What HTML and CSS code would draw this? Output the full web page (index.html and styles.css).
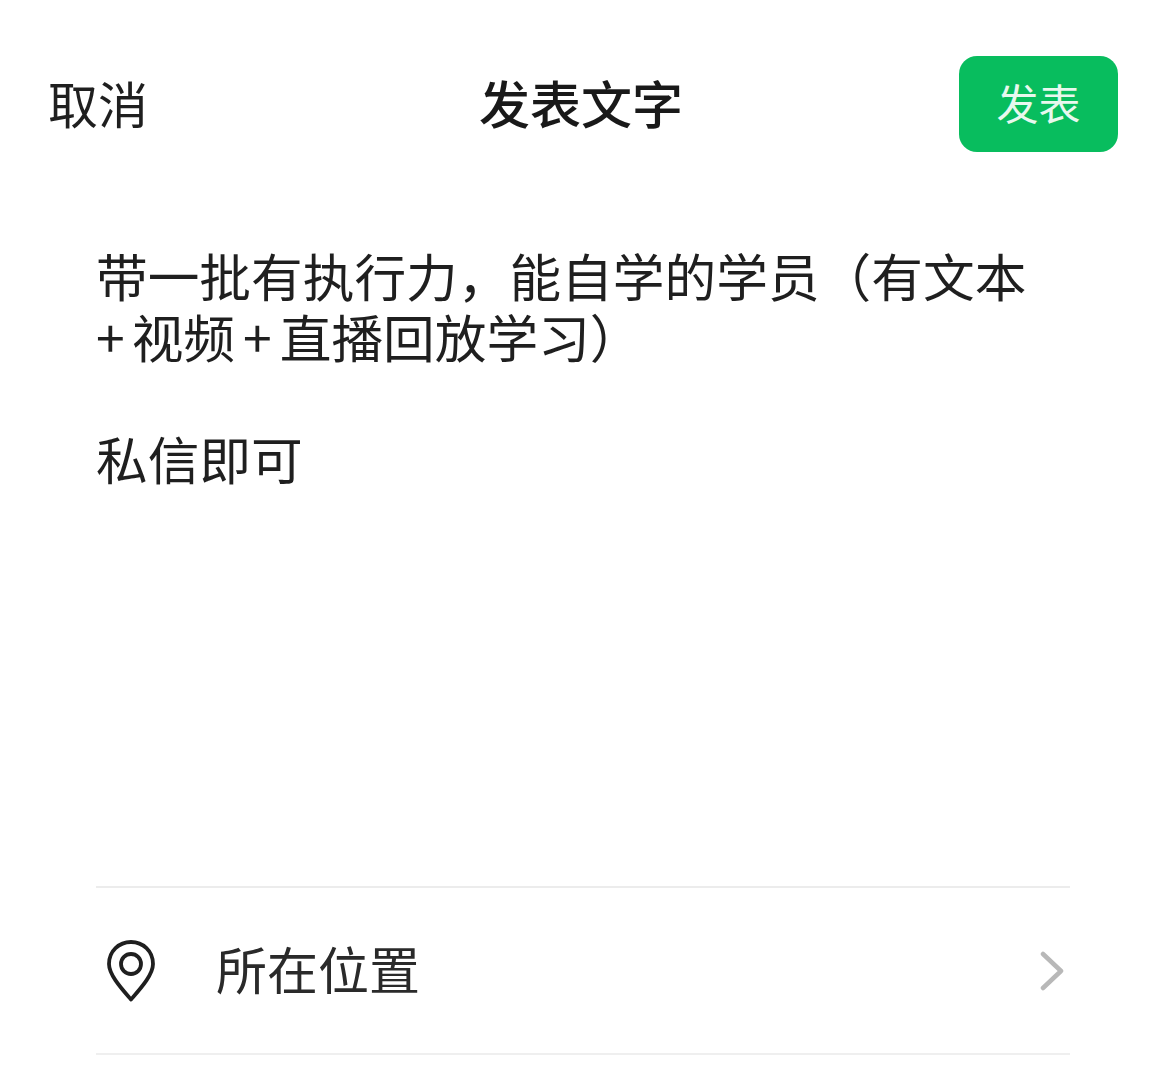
FILE: index.html
```html
<!DOCTYPE html>
<html lang="zh-CN">
<head>
    <meta charset="UTF-8">
    <title>发表文字</title>
    <link rel="stylesheet" href="styles.css">
</head>
<body>
<div class="page">
    <div class="header">
        <span class="cancel">取消</span>
        <span class="title">发表文字</span>
        <span class="send">发表</span>
    </div>
    <div class="content">
        <p class="para">带一批有执行力&#xFF0C;能自学的学员&#xFF08;有文本<br><span class="plus-first">+</span>视频<span class="plus-second">+</span>直播回放学习&#xFF09;</p>
        <p class="para">私信即可</p>
    </div>
    <div class="location">
        <svg class="pin" viewBox="0 0 48 62" width="48" height="62">
            <path d="M24 59.5C15 49 2 35 2 24C2 11 12 2 24 2C36 2 46 11 46 24C46 35 33 49 24 59.5Z" fill="none" stroke="#1f1f1f" stroke-width="3.8" stroke-linejoin="round"/>
            <circle cx="24" cy="24" r="10" fill="none" stroke="#1f1f1f" stroke-width="3.8"/>
        </svg>
        <span class="location-text">所在位置</span>
        <svg class="arrow" viewBox="0 0 24 40" width="24" height="40">
            <path d="M3 3L21 20L3 37" fill="none" stroke="#b8b8b8" stroke-width="4.5" stroke-linecap="round" stroke-linejoin="round"/>
        </svg>
    </div>
</div>
</body>
</html>
```

FILE: styles.css
```css
*{
    margin: 0;
    padding: 0;
    box-sizing: border-box;
}
html,body{
    background: #fff;
}
body{
    font-family: "Noto Sans CJK SC", "Noto Sans", sans-serif;
    color: #1f1f1f;
}
.page{
    width: 1166px;
    height: 1080px;
    overflow: hidden;
}
/*顶部栏*/
.header{
    height: 96px;
    margin-top: 56px;
    padding: 0 48px;
    display: grid;
    grid-template-columns: 1fr auto 1fr;
    align-items: center;
}
.cancel{
    font-size: 50px;
    line-height: 92px;
    padding-bottom: 4px;
}
.title{
    margin-right: 4px;
    font-size: 51px;
    font-weight: 500;
    line-height: 92px;
    padding-bottom: 4px;
    color: #191919;
}
.send{
    justify-self: end;
    width: 159px;
    height: 96px;
    border-radius: 18px;
    background: #08bd5e;
    color: #e8f8ee;
    font-size: 42px;
    line-height: 92px;
    text-align: center;
}
/*正文*/
.content{
    height: 736px;
    margin: 0 96px;
    padding-top: 92px;
    border-bottom: 2px solid #ececec;
}
.para{
    font-size: 51.7px;
    line-height: 61px;
    margin-bottom: 61px;
    white-space: nowrap;
}
/*加号比正文宽*/
.plus-first{
    margin-right: 7px;
}
.plus-second{
    margin: 0 8px;
}
/*所在位置*/
.location{
    height: 167px;
    margin: 0 96px;
    padding: 0 6px 0 11px;
    display: flex;
    align-items: center;
    border-bottom: 2px solid #efefef;
}
.pin{
    flex: none;
}
.location-text{
    margin-left: 61px;
    font-size: 51px;
    line-height: 60px;
    padding-bottom: 6px;
    color: #2a2a2a;
}
.arrow{
    flex: none;
    margin-left: auto;
}
```
